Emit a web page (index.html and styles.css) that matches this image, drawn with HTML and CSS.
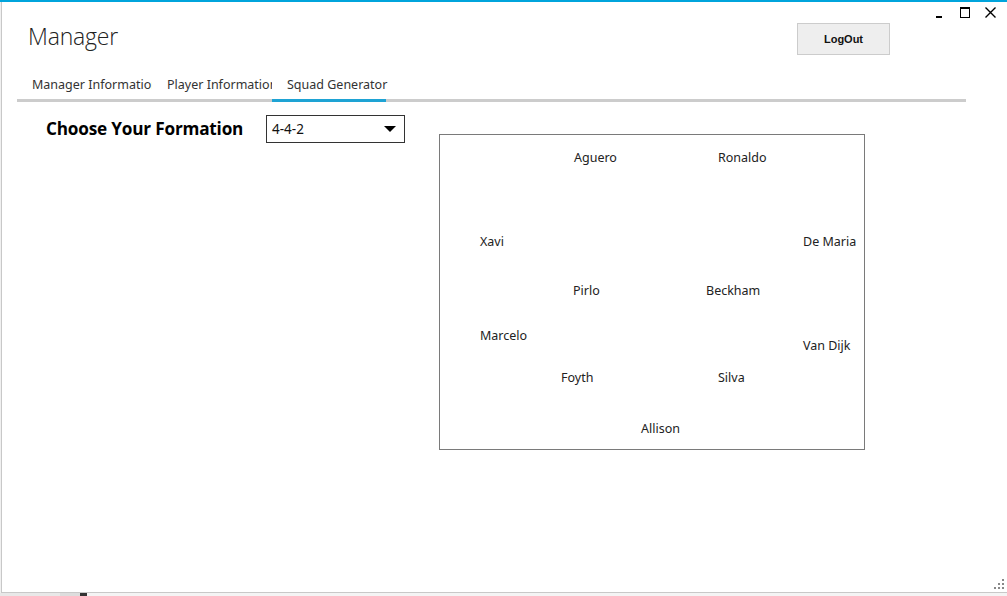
FILE: index.html
```html
<!DOCTYPE html>
<html>
<head>
<meta charset="utf-8">
<link rel="stylesheet" href="styles.css">
</head>
<body>
<div class="desk">
  <div class="window">
    <div class="topbar"></div>
    <div class="controls">
      <span class="ctl min"></span>
      <span class="ctl max"></span>
      <svg class="ctl close" width="11" height="11" viewBox="0 0 11 11"><path d="M0.5 0.5 L10.5 10.5 M10.5 0.5 L0.5 10.5" stroke="#000" stroke-width="1.4"/></svg>
    </div>
    <header class="head">
      <h1 class="title">Manager</h1>
      <button class="logout">LogOut</button>
    </header>
    <nav class="tabs">
      <div class="tab clip"><span class="clipbox">Manager Information</span></div>
      <div class="tab clip2"><span class="clipbox">Player Information</span></div>
      <div class="tab active">Squad Generator</div>
    </nav>
    <main class="content">
      <div class="left">
        <h2 class="choose">Choose Your Formation</h2>
        <div class="combo"><span>4-4-2</span><span class="arrow"></span></div>
      </div>
      <div class="pitch">
        <span class="p" style="left:134px;top:15px">Aguero</span>
        <span class="p" style="left:278px;top:15px">Ronaldo</span>
        <span class="p" style="left:40px;top:99px">Xavi</span>
        <span class="p" style="left:363px;top:99px">De Maria</span>
        <span class="p" style="left:133px;top:148px">Pirlo</span>
        <span class="p" style="left:266px;top:148px">Beckham</span>
        <span class="p" style="left:40px;top:193px">Marcelo</span>
        <span class="p" style="left:363px;top:203px">Van Dijk</span>
        <span class="p" style="left:121px;top:235px">Foyth</span>
        <span class="p" style="left:278px;top:235px">Silva</span>
        <span class="p" style="left:201px;top:286px">Allison</span>
      </div>
    </main>
    <div class="grip">
      <i style="left:8px;top:0"></i>
      <i style="left:4px;top:4px"></i><i style="left:8px;top:4px"></i>
      <i style="left:0;top:8px"></i><i style="left:4px;top:8px"></i><i style="left:8px;top:8px"></i>
    </div>
  </div>
  <div class="behind"></div>
</div>
</body>
</html>
```
FILE: styles.css
```css
html, body { margin: 0; padding: 0; }
body {
  width: 1007px; height: 596px; overflow: hidden;
  background: #f0f0f0;
  font-family: "Noto Sans", "Open Sans", sans-serif;
  color: #222;
}
.desk { position: relative; width: 1007px; height: 596px; }
.window {
  position: relative;
  margin-left: 1px;
  width: 1006px; height: 593px;
  box-sizing: border-box;
  background: #fff;
  border-left: 1px solid #c8c8c8;
  border-bottom: 1px solid #c8c8c8;
  display: flex; flex-direction: column;
}
.topbar { height: 2px; background: #00a4dc; margin-left: -2px; }
.controls {
  position: absolute; top: 7px; right: 11px;
  display: flex; align-items: center; gap: 15px;
}
.ctl { display: block; }
.min { width: 6px; height: 2px; background: #000; margin-top: 9px; margin-right: 3px; }
.max { width: 8px; height: 8px; border: 1px solid #000; border-top-width: 2px; }
.head {
  display: flex; justify-content: space-between; align-items: flex-start;
  padding: 0 117px 0 26px; height: 70px;
}
.title {
  margin: 18px 0 0 0;
  font-family: "Open Sans", sans-serif; font-weight: 300;
  font-size: 23px; color: #222; letter-spacing: -0.2px;
}
.logout {
  margin-top: 21px;
  width: 93px; height: 32px;
  background: #eeeeee; border: 1px solid #cccccc;
  font-family: "Liberation Sans", sans-serif; font-weight: bold; font-size: 11px; color: #111;
  padding: 0;
}
.tabs {
  display: flex; margin: 0 41px 0 15px;
  border-bottom: 3px solid #cccccc; height: 27px;
}
.tab {
  font-size: 12.5px; color: #333; padding: 4px 0 0 15px; white-space: nowrap;
  box-sizing: border-box; height: 27px; font-weight: 400;
}
.clipbox { display: block; overflow: hidden; }
.clip { width: 135px; }
.clip2 { width: 120px; }
.active {
  width: 114px; border-bottom: 3px solid #1ea3d4; height: 30px; margin-bottom: -3px;
}
.content { display: flex; padding: 13px 0 0 44px; }
.left { display: flex; align-items: flex-start; width: 393px; }
.choose {
  margin: 2px 0 0 0; width: 220px;
  font-family: "Open Sans", sans-serif; font-weight: 700; font-size: 17.2px; color: #000; letter-spacing: -0.2px;
}
.combo {
  width: 139px; height: 28px; box-sizing: border-box;
  border: 1px solid #333; display: flex; align-items: center; justify-content: space-between;
  padding: 0 8px 0 5px; font-size: 13.5px; color: #111;
}
.arrow {
  width: 0; height: 0; border-left: 6px solid transparent; border-right: 6px solid transparent;
  border-top: 6px solid #000;
}
.pitch {
  position: relative; margin-top: 19px;
  width: 426px; height: 316px; box-sizing: border-box;
  border: 1px solid #7a7a7a;
}
.p { position: absolute; font-size: 12.5px; line-height: 16px; color: #222; white-space: nowrap; }
.grip { position: absolute; right: 3px; bottom: 3px; width: 10px; height: 10px; }
.grip i { position: absolute; width: 2px; height: 2px; background: #888; }
.behind { height: 3px; background: linear-gradient(90deg, #e8e8e8 0 60px, #ddd 60px 80px, #333 80px 87px, #f4f4f4 87px); }
```
